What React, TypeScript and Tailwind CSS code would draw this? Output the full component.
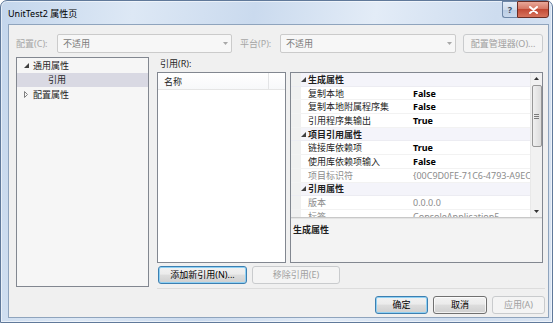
import React from "react";

type Row = { cat?: string; n?: string; v?: string; grey?: boolean };

const rows: Row[] = [
  { cat: "生成属性" },
  { n: "复制本地", v: "False" },
  { n: "复制本地附属程序集", v: "False" },
  { n: "引用程序集输出", v: "True" },
  { cat: "项目引用属性" },
  { n: "链接库依赖项", v: "True" },
  { n: "使用库依赖项输入", v: "False" },
  { n: "项目标识符", v: "{00C9D0FE-71C6-4793-A9EC-5F2B1D3A8E77}", grey: true },
  { cat: "引用属性" },
  { n: "版本", v: "0.0.0.0", grey: true },
  { n: "标签", v: "ConsoleApplication5", grey: true },
];

function Expanded() {
  return (
    <svg width="5" height="5" viewBox="0 0 5 5" className="shrink-0">
      <path d="M5 0 V5 H0 Z" fill="#404040" />
    </svg>
  );
}

function Collapsed() {
  return (
    <svg width="4" height="7" viewBox="0 0 4 7" className="shrink-0">
      <path d="M0.5 0.5 L3.5 3.5 L0.5 6.5 Z" fill="none" stroke="#808080" strokeWidth="1" />
    </svg>
  );
}

function DropArrow() {
  return (
    <svg width="5" height="3" viewBox="0 0 5 3" className="shrink-0">
      <path d="M0 0 H5 L2.5 3 Z" fill="#a8a8a8" />
    </svg>
  );
}

function Combo({ wide }: { wide: boolean }) {
  return (
    <div
      className={
        (wide ? "w-[176px]" : "w-[175px]") +
        " h-[19px] border border-[#cbcbcb] rounded-[2px] bg-[#f7f7f7] flex items-center pl-[5px] pr-[3px] text-[#7a7a7a]"
      }
    >
      <span className="flex-1">不适用</span>
      <DropArrow />
    </div>
  );
}

const btnBase = "h-[18px] rounded-[3px] border flex items-center justify-center leading-[12px]";
const btnNormal =
  btnBase +
  " border-[#707070] bg-[linear-gradient(to_bottom,#f2f2f2_0%,#ebebeb_45%,#dddddd_50%,#cfcfcf_100%)] text-black shadow-[inset_0_0_0_1px_rgba(255,255,255,0.7)]";
const btnDefault =
  btnBase +
  " border-[#3c7fb1] bg-[linear-gradient(to_bottom,#f2f2f2_0%,#ebebeb_45%,#dddddd_50%,#cfcfcf_100%)] text-black shadow-[inset_0_0_0_1px_#8fd0f3]";
const btnDisabled = btnBase + " border-[#c9cbcd] bg-[#f4f4f4] text-[#a0a0a0]";

function PropGrid() {
  return (
    <div className="ml-[4px] w-[253px] h-[191px] border border-[#828790] bg-white flex flex-col">
      <div className="h-[144px] flex">
        <div className="flex-1 overflow-hidden">
          {rows.map((r, i) =>
            r.cat ? (
              <div key={i} className="h-[13.7px] flex items-center bg-[#f4f4fa] border-b border-[#ececf2]">
                <div className="w-[10px] h-full bg-[#f0f0f0]" />
                <div className="pl-[0px] flex items-center">
                  <Expanded />
                  <span className="ml-[2px] font-bold leading-[13px] text-[#1e1e1e]">{r.cat}</span>
                </div>
              </div>
            ) : (
              <div key={i} className="h-[13.7px] flex items-center border-b border-[#f2f2f2]">
                <div className="w-[10px] h-full bg-[#f0f0f0]" />
                <div
                  className={
                    "w-[109px] pl-[7px] leading-[13px] whitespace-nowrap " +
                    (r.grey ? "text-[#8c8c8c]" : "text-[#1e1e1e]")
                  }
                >
                  {r.n}
                </div>
                <div
                  className={
                    "flex-1 pl-[3px] leading-[13px] whitespace-nowrap overflow-hidden " +
                    (r.grey ? "text-[#8c8c8c]" : "font-bold text-black")
                  }
                >
                  {r.v}
                </div>
              </div>
            )
          )}
        </div>
        <div className="w-[12px] h-full bg-[#f1f1f1] border-l border-[#e8e8e8] flex flex-col items-center">
          <div className="h-[11px] w-full flex items-center justify-center">
            <svg width="5" height="3" viewBox="0 0 5 3">
              <path d="M0 3 H5 L2.5 0 Z" fill="#333" />
            </svg>
          </div>
          <div className="mt-[1px] w-[10px] h-[62px] rounded-[2px] border border-[#979797] bg-[linear-gradient(to_right,#f0f0f0,#dcdcdc)] flex flex-col items-center justify-center gap-[1px]">
            <div className="w-[5px] h-[1px] bg-[#7b7b7b]" />
            <div className="w-[5px] h-[1px] bg-[#7b7b7b]" />
            <div className="w-[5px] h-[1px] bg-[#7b7b7b]" />
          </div>
          <div className="flex-1" />
          <div className="h-[11px] w-full flex items-center justify-center">
            <svg width="5" height="3" viewBox="0 0 5 3">
              <path d="M0 0 H5 L2.5 3 Z" fill="#333" />
            </svg>
          </div>
        </div>
      </div>
      <div className="h-[2px] bg-[#e4e4e4] border-t border-[#c8c8c8]" />
      <div className="flex-1 bg-[#f3f3f3] pl-[2px] pt-[4px]">
        <span className="font-bold leading-[13px] text-[#1e1e1e]">生成属性</span>
      </div>
    </div>
  );
}

export default function App() {
  return (
    <div className="w-[558px] h-[327px] bg-white font-['Noto_Sans','Noto_Sans_CJK_SC',sans-serif] text-[9px] leading-[13px] text-black overflow-hidden">
      <div className="w-[553px] h-[323px] rounded-t-[7px] border border-[#60799a] bg-[linear-gradient(100deg,#c4d6ec_0%,#dde8f5_22%,#cadaee_42%,#e3ecf7_62%,#cddcef_82%,#dae5f3_100%)] flex flex-col shadow-[inset_0_0_0_1px_rgba(255,255,255,0.55)]">
        <div className="h-[23px] flex items-start relative">
          <div className="pl-[7px] pt-[6px] text-[9px] leading-[13px] text-black">UnitTest2 属性页</div>
          <div className="absolute top-0 right-[3px] flex h-[17px]">
            <div className="w-[15px] h-full rounded-bl-[3px] border border-[#6d86a6] border-r-0 bg-[linear-gradient(to_bottom,#e6eef8_0%,#cfdcec_50%,#b8cbe3_51%,#c9d8eb_100%)] flex items-center justify-center text-[9px] font-bold text-[#3b4f68]">
              ?
            </div>
            <div className="w-[32px] h-full rounded-br-[3px] border border-[#6b2d24] bg-[linear-gradient(to_bottom,#e9a899_0%,#d67865_45%,#c24a35_50%,#d7735c_100%)] flex items-center justify-center">
              <svg width="9" height="8" viewBox="0 0 9 8">
                <path d="M1 1 L8 7 M8 1 L1 7" stroke="#ffffff" strokeWidth="2" strokeLinecap="round" />
              </svg>
            </div>
          </div>
        </div>
        <div className="ml-[7px] mr-[3px] h-[294px] border border-[#8fa4bd] bg-[#f0f0f0] flex flex-col">
          <div className="flex items-center mt-[9px] ml-[7px] h-[19px]">
            <span className="w-[41px] text-[#a6a6a6]">配置(C):</span>
            <Combo wide={false} />
            <span className="ml-[8px] w-[40px] text-[#a6a6a6]">平台(P):</span>
            <Combo wide={true} />
            <div className={btnDisabled + " ml-[7px] w-[80px] h-[19px]"}>配置管理器(O)...</div>
          </div>

          <div className="flex mt-[4px] ml-[7px]">
            <div className="w-[133px] h-[230px] border border-[#828790] bg-[#f6f6f6] pt-[0px]">
              <div className="h-[14.5px] flex items-center pl-[7px]">
                <Expanded />
                <span className="ml-[4px] text-[#1e1e1e]">通用属性</span>
              </div>
              <div className="h-[14.5px] flex items-center pl-[31px] bg-[#d9d9e3]">
                <span className="text-[#1e1e1e]">引用</span>
              </div>
              <div className="h-[14.5px] flex items-center pl-[7px]">
                <Collapsed />
                <span className="ml-[5px] text-[#1e1e1e]">配置属性</span>
              </div>
            </div>

            <div className="ml-[8px] flex flex-col w-[386px]">
              <div className="h-[15px] pl-[3px] leading-[14px] text-[#1e1e1e]">引用(R):</div>
              <div className="flex h-[191px]">
                <div className="w-[129px] h-full border border-[#828790] bg-white">
                  <div className="h-[17px] flex border-b border-[#e5e5e5] bg-[linear-gradient(to_bottom,#ffffff,#f7f8fa)]">
                    <div className="w-[111px] h-full pl-[6px] flex items-center border-r border-[#e3e4e6] text-[#1e1e1e]">
                      名称
                    </div>
                    <div className="flex-1" />
                  </div>
                </div>
                <PropGrid />
              </div>
              <div className="flex mt-[3px]">
                <div className={btnDefault + " ml-[1px] w-[89px]"}>添加新引用(N)...</div>
                <div className={btnDisabled + " ml-[5px] w-[88px]"}>移除引用(E)</div>
              </div>
            </div>
          </div>

          <div className="mt-[1px] ml-[148px] w-[388px] h-[1px] bg-[#dcdcdc]" />

          <div className="flex justify-end mt-[7px] pr-[3px] gap-[5px]">
            <div className={btnDefault + " w-[53px]"}>确定</div>
            <div className={btnNormal + " w-[54px]"}>取消</div>
            <div className={btnDisabled + " w-[53px]"}>应用(A)</div>
          </div>
        </div>
      </div>
    </div>
  );
}
